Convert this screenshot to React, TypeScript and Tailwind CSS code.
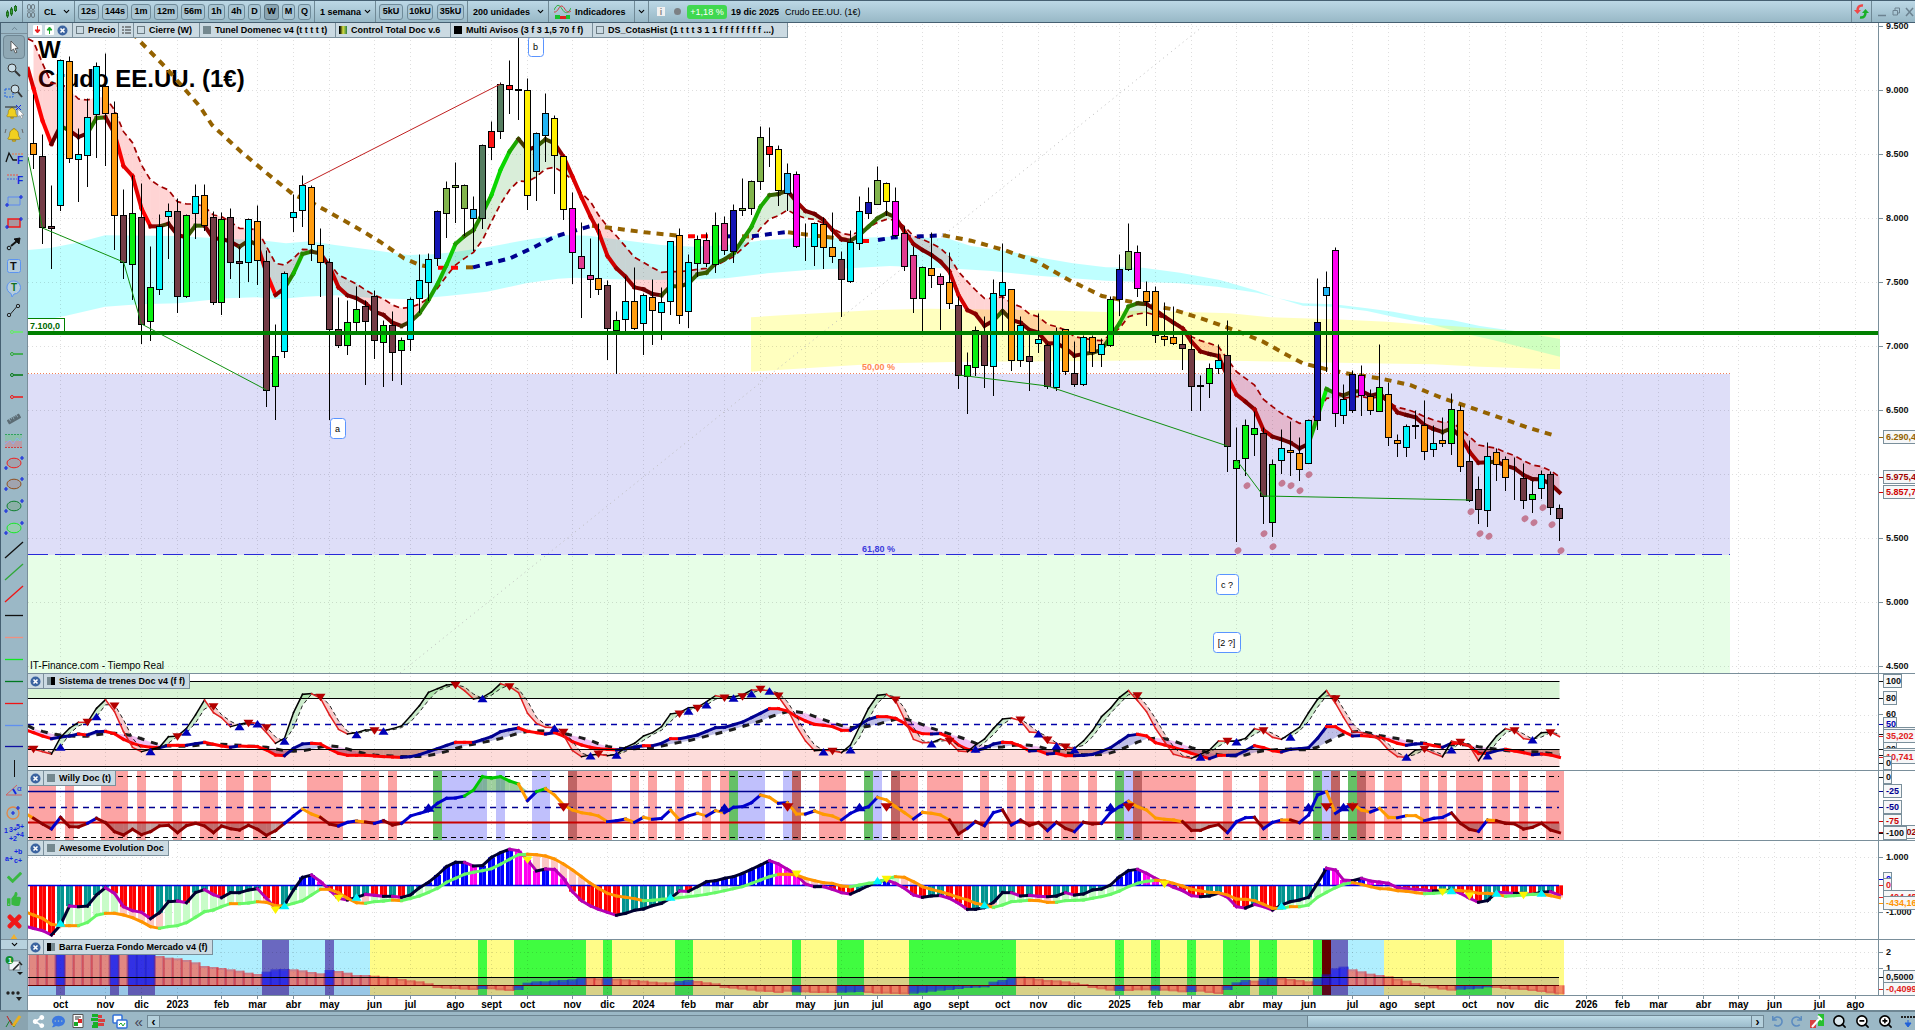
import React from 'react';
import { FiChevronDown, FiChevronUp, FiSearch, FiZoomIn, FiZoomOut } from 'react-icons/fi';
import { FaBell, FaCheck, FaThumbsUp, FaTimes, FaShareAlt, FaCommentDots, FaUndo, FaRedo, FaRuler } from 'react-icons/fa';

type Pt = [number, number];
type Candle = [string, number, number, number, number];

const GRAY = '#7a8f9b';

// Levels are stored in thirds of a pixel, x positions as bar indexes
const bx = (i: number) => Math.round(8.976 * i) + 5.5;
const ly = (v: number) => Math.floor(v / 3) + 0.5;

const nums = (s: string) => s.trim().split(/\s+/).map(Number);

const COLORS: Record<string, string> = {
  o: '#ff9c10', m: '#743c46', c: '#00f4fc', g: '#08f010', n: '#1414b4', l: '#82b44c',
  b: '#22b4f4', d: '#557d60', r: '#ff1414', k: '#000000', y: '#fff000', f: '#ff00f0', p: '#e03c90',
};

// colour, body top, body bottom, high, low
const candles: Candle[] = [
  ['o', 430, 463, 282, 506], ['m', 469, 683, 402, 731], ['m', 679, 685, 555, 806], ['c', 181, 616, 177, 632],
  ['o', 184, 475, 168, 488], ['c', 463, 479, 384, 605], ['c', 352, 466, 294, 560], ['c', 199, 343, 186, 473],
  ['o', 259, 341, 159, 497], ['o', 340, 646, 303, 749], ['m', 646, 787, 567, 836], ['g', 640, 793, 527, 899],
  ['m', 652, 973, 549, 1031], ['g', 862, 964, 738, 1022], ['c', 679, 868, 642, 884], ['c', 634, 649, 609, 776],
  ['m', 634, 889, 594, 938], ['g', 646, 889, 642, 893], ['c', 589, 640, 552, 716], ['o', 586, 677, 552, 690],
  ['m', 652, 907, 633, 914], ['g', 658, 907, 637, 944], ['m', 652, 787, 624, 836], ['m', 784, 790, 740, 893],
  ['c', 658, 787, 655, 845], ['o', 664, 781, 615, 854], ['m', 784, 1171, 750, 1218], ['g', 1069, 1159, 972, 1257],
  ['c', 820, 1055, 814, 1072], ['c', 637, 652, 584, 695], ['c', 556, 631, 526, 680], ['o', 562, 733, 555, 782],
  ['o', 736, 787, 686, 890], ['m', 787, 988, 775, 1258], ['m', 988, 1036, 891, 1043], ['g', 967, 1036, 900, 1064],
  ['g', 928, 967, 858, 996], ['m', 919, 964, 900, 1152], ['m', 889, 1021, 871, 1074], ['g', 976, 1027, 960, 1158],
  ['m', 976, 1057, 933, 1140], ['g', 1021, 1051, 1012, 1152], ['c', 898, 1018, 892, 1050], ['c', 841, 895, 762, 937],
  ['c', 778, 847, 760, 900], ['n', 634, 775, 632, 795], ['l', 565, 640, 543, 713], ['l', 556, 562, 486, 668],
  ['l', 556, 625, 552, 705], ['b', 628, 655, 588, 750], ['d', 436, 655, 434, 686], ['r', 394, 442, 363, 479],
  ['d', 253, 394, 246, 416], ['r', 256, 269, 180, 339], ['k', 268, 271, 60, 357], ['y', 271, 586, 234, 629],
  ['b', 400, 514, 396, 600], ['b', 340, 406, 279, 485], ['y', 355, 466, 345, 581], ['y', 469, 628, 465, 659],
  ['f', 625, 757, 576, 851], ['p', 769, 805, 667, 951], ['p', 826, 838, 714, 893], ['o', 835, 868, 670, 884],
  ['m', 856, 985, 840, 1079], ['g', 961, 991, 934, 1119], ['c', 904, 958, 830, 990], ['o', 904, 985, 801, 989],
  ['c', 886, 971, 880, 1064], ['o', 892, 931, 837, 1032], ['c', 907, 937, 861, 1017], ['c', 724, 904, 724, 942],
  ['o', 706, 946, 684, 971], ['c', 787, 934, 762, 983], ['g', 718, 790, 707, 830], ['p', 721, 790, 698, 798],
  ['g', 676, 793, 636, 818], ['p', 670, 751, 648, 762], ['n', 631, 754, 612, 788], ['l', 625, 631, 534, 645],
  ['l', 544, 625, 540, 642], ['l', 412, 544, 378, 567], ['r', 439, 463, 381, 500], ['y', 448, 571, 435, 615],
  ['b', 520, 580, 489, 630], ['f', 523, 739, 513, 741], ['k', 736, 737, 669, 782], ['c', 670, 739, 666, 795],
  ['o', 673, 742, 652, 806], ['o', 742, 769, 636, 788], ['m', 778, 838, 753, 948], ['c', 727, 844, 690, 846],
  ['c', 634, 730, 588, 749], ['n', 607, 640, 561, 656], ['l', 541, 613, 498, 614], ['y', 550, 604, 546, 645],
  ['f', 604, 706, 561, 710], ['p', 700, 799, 680, 812], ['p', 766, 895, 740, 938], ['g', 802, 895, 798, 993],
  ['o', 805, 826, 696, 863], ['p', 829, 853, 820, 987], ['o', 847, 910, 756, 924], ['m', 916, 1126, 890, 1164],
  ['g', 1096, 1129, 1056, 1239], ['g', 991, 1102, 980, 1125], ['m', 1000, 1096, 950, 1161], ['c', 880, 1099, 837, 1185],
  ['c', 847, 886, 729, 995], ['o', 868, 1081, 868, 1110], ['c', 976, 1081, 950, 1098], ['m', 1069, 1084, 990, 1170],
  ['c', 1018, 1030, 939, 1058], ['m', 1036, 1159, 1030, 1166], ['c', 1000, 1162, 981, 1170], ['o', 988, 1114, 988, 1124],
  ['m', 1120, 1153, 1025, 1160], ['c', 1012, 1153, 1005, 1157], ['o', 1012, 1057, 1007, 1100], ['c', 1033, 1063, 1015, 1098],
  ['g', 898, 1036, 888, 1040], ['n', 808, 898, 763, 947], ['l', 754, 808, 669, 810], ['f', 757, 865, 735, 888],
  ['o', 874, 904, 845, 975], ['o', 874, 1006, 858, 1028], ['o', 1009, 1018, 907, 1035], ['o', 1012, 1030, 918, 1034],
  ['m', 1033, 1045, 1000, 1107], ['m', 1048, 1159, 1005, 1230], ['k', 1156, 1159, 1125, 1230], ['g', 1105, 1150, 1089, 1191],
  ['c', 1081, 1105, 1032, 1120], ['m', 1066, 1339, 960, 1413], ['g', 1381, 1405, 1281, 1623], ['g', 1276, 1375, 1257, 1425],
  ['g', 1285, 1303, 1235, 1367], ['m', 1300, 1489, 1283, 1569], ['g', 1393, 1567, 1377, 1608], ['c', 1345, 1381, 1287, 1419],
  ['o', 1351, 1357, 1263, 1425], ['o', 1360, 1408, 1312, 1440], ['c', 1261, 1390, 1257, 1391], ['n', 967, 1261, 834, 1287],
  ['b', 862, 886, 815, 1115], ['f', 751, 1240, 741, 1278], ['c', 1198, 1246, 1152, 1269], ['n', 1123, 1231, 1111, 1238],
  ['f', 1126, 1186, 1095, 1247], ['o', 1189, 1231, 1167, 1244], ['g', 1162, 1234, 1032, 1234], ['o', 1183, 1312, 1146, 1335],
  ['o', 1321, 1330, 1303, 1368], ['c', 1279, 1342, 1273, 1368], ['k', 1276, 1279, 1230, 1314], ['o', 1276, 1354, 1200, 1377],
  ['c', 1330, 1348, 1275, 1368], ['o', 1321, 1330, 1251, 1338], ['g', 1228, 1330, 1179, 1362], ['o', 1231, 1399, 1217, 1413],
  ['m', 1384, 1501, 1320, 1503], ['m', 1468, 1528, 1428, 1569], ['c', 1369, 1531, 1326, 1578], ['o', 1357, 1393, 1345, 1440],
  ['o', 1378, 1432, 1369, 1470], ['k', 1429, 1430, 1373, 1497], ['m', 1435, 1501, 1390, 1524], ['g', 1483, 1498, 1440, 1536],
  ['c', 1423, 1465, 1410, 1494], ['m', 1423, 1522, 1415, 1542], ['m', 1525, 1555, 1512, 1620],
];

const fastMa = nums(`265 362 432 378 392 411 400 354 352 400 498 528 625 679 679 671 705 712 677 677
716 716 725 740 722 735 820 885 865 820 762 755 760 800 862 886 895 910 935 945
968 978 965 940 900 852 795 732 708 690 640 585 510 455 417 450 440 418 430 470
530 592 650 695 768 805 830 862 868 882 886 858 860 850 823 818 790 778 760 720
680 620 586 582 572 605 633 642 660 690 718 722 705 680 655 640 652 695 732 750
765 785 815 885 930 942 977 962 933 960 968 990 998 1030 1030 1045 1067 1062 1058 1050
1010 970 920 910 912 930 950 968 985 1025 1054 1062 1068 1130 1184 1205 1228 1290 1310 1318
1328 1345 1332 1250 1167 1180 1186 1175 1173 1187 1180 1205 1237 1245 1252 1275 1287 1296 1285 1310
1355 1388 1387 1385 1397 1405 1425 1437 1438 1452 1477`);

const slowMa = nums(`125 190 250 250 270 297 300 292 292 330 395 428 495 540 558 570 605 612 612 620
645 650 665 685 686 690 740 790 795 775 748 750 770 790 825 838 852 870 885 897
915 925 922 912 895 865 828 795 775 757 720 665 612 570 543 545 530 507 502 518
540 580 605 645 680 708 740 772 787 803 817 815 815 812 808 805 797 783 770 745
720 685 657 647 630 645 655 658 670 685 700 705 695 682 667 658 660 680 708 718
730 745 770 815 845 870 895 895 890 910 920 942 950 973 980 990 1010 1015 1020 1022
1005 985 950 942 938 945 955 965 980 1010 1022 1030 1040 1078 1115 1135 1155 1198 1220 1240
1255 1270 1265 1240 1195 1193 1195 1190 1190 1195 1190 1207 1222 1228 1237 1250 1260 1267 1265 1287
1310 1335 1340 1345 1357 1367 1382 1395 1400 1412 1430`);

const cyanTop: Pt[] = [[28, 750], [50, 744], [77, 728], [105, 706], [175, 708], [212, 714], [265, 722], [286, 730], [310, 724], [335, 735], [367, 748], [408, 765], [433, 763], [453, 757], [490, 740], [530, 718], [559, 705], [588, 707], [616, 718], [661, 735], [694, 740], [726, 735], [767, 720], [800, 714], [849, 715], [890, 710], [947, 715], [971, 738], [1004, 752], [1041, 773], [1073, 790], [1106, 802], [1143, 803], [1180, 818], [1220, 840], [1257, 872], [1277, 894], [1303, 910], [1334, 913], [1367, 925], [1393, 935], [1420, 950], [1452, 960], [1480, 978], [1513, 992], [1560, 1017]];
const cyanBottom: Pt[] = [[28, 970], [65, 948], [105, 920], [139, 913], [178, 910], [226, 895], [257, 892], [277, 898], [305, 890], [336, 886], [376, 895], [411, 898], [447, 888], [487, 875], [526, 850], [558, 836], [575, 833], [612, 838], [653, 840], [702, 838], [726, 835], [767, 820], [808, 810], [849, 805], [890, 798], [947, 805], [992, 813], [1041, 828], [1106, 842], [1180, 850], [1217, 860], [1257, 878], [1280, 896], [1303, 917], [1333, 920], [1367, 933], [1393, 950], [1427, 970], [1463, 1000], [1493, 1020], [1530, 1048], [1560, 1070]];
const yellowTop: Pt[] = [[751, 952], [786, 945], [877, 930], [930, 926], [1060, 932], [1107, 936], [1135, 932], [1180, 935], [1230, 940], [1270, 952], [1334, 958], [1387, 965], [1427, 975], [1452, 978], [1513, 992], [1560, 1005]];
const yellowBottom: Pt[] = [[751, 1115], [829, 1100], [886, 1090], [967, 1085], [1090, 1083], [1171, 1080], [1247, 1083], [1367, 1090], [1433, 1093], [1480, 1100], [1560, 1108]];

const BROWN = '#946200';
const NAVY = '#000090';
const tunnel: { color: string; pts: Pt[] }[] = [
  { color: BROWN, pts: [[133, 96], [137, 115], [165, 200], [184, 265], [200, 320], [212, 375], [241, 455], [269, 525], [294, 585], [310, 605], [331, 640], [355, 680], [380, 725], [404, 775], [420, 795], [433, 803]] },
  { color: '#ff0000', pts: [[438, 803], [461, 803]] },
  { color: BROWN, pts: [[466, 802], [473, 802]] },
  { color: NAVY, pts: [[473, 802], [510, 775], [535, 740], [555, 710], [571, 695], [592, 677]] },
  { color: BROWN, pts: [[592, 677], [612, 684], [645, 697], [682, 708]] },
  { color: '#ff0000', pts: [[688, 709], [714, 709]] },
  { color: NAVY, pts: [[727, 709], [740, 709]] },
  { color: BROWN, pts: [[742, 709], [751, 709]] },
  { color: NAVY, pts: [[752, 709], [770, 702], [788, 696]] },
  { color: BROWN, pts: [[788, 697], [833, 713], [853, 722]] },
  { color: '#ff0000', pts: [[862, 723], [875, 723]] },
  { color: NAVY, pts: [[878, 720], [894, 712], [920, 709], [943, 706]] },
  { color: BROWN, pts: [[943, 706], [971, 722], [1004, 750], [1037, 785], [1069, 840], [1102, 888], [1139, 910], [1171, 927], [1204, 958], [1237, 993], [1263, 1025], [1287, 1065], [1303, 1090], [1327, 1108], [1350, 1122], [1380, 1135], [1410, 1155], [1443, 1195], [1470, 1222], [1497, 1250], [1527, 1282], [1556, 1308]] },
];

const dots: Pt[] = [[1238, 1652], [1247, 1457], [1264, 1601], [1273, 1640], [1282, 1450], [1291, 1457], [1300, 1472], [1309, 1424], [1471, 1535], [1480, 1601], [1489, 1609], [1525, 1556], [1534, 1568], [1543, 1523], [1552, 1574], [1561, 1652]];

const months: [number, string][] = [
  [3, 'oct'], [8, 'nov'], [12, 'dic'], [16, '2023'], [21, 'feb'], [25, 'mar'], [29, 'abr'], [33, 'may'], [38, 'jun'], [42, 'jul'], [47, 'ago'], [51, 'sept'],
  [55, 'oct'], [60, 'nov'], [64, 'dic'], [68, '2024'], [73, 'feb'], [77, 'mar'], [81, 'abr'], [86, 'may'], [90, 'jun'], [94, 'jul'], [99, 'ago'], [103, 'sept'],
  [108, 'oct'], [112, 'nov'], [116, 'dic'], [121, '2025'], [125, 'feb'], [129, 'mar'], [134, 'abr'], [138, 'may'], [142, 'jun'], [147, 'jul'], [151, 'ago'], [155, 'sept'],
  [160, 'oct'], [164, 'nov'], [168, 'dic'], [173, '2026'], [177, 'feb'], [181, 'mar'], [186, 'abr'], [190, 'may'], [194, 'jun'], [199, 'jul'], [203, 'ago'],
];

const trainFast = nums(`268 275 282 232 205 187 187 145 119 155 215 262 275 268 262 230 228 205 165 120
158 173 200 193 187 190 218 250 235 158 103 101 115 165 208 222 218 210 209 212
206 198 168 137 97 86 75 73 92 117 112 96 71 80 98 160 190 202 203 225
272 290 285 283 287 283 262 250 228 218 200 162 158 143 142 125 107 112 110 105
90 90 92 110 148 200 243 272 270 273 278 255 200 145 106 103 122 178 238 248
248 237 245 273 275 255 237 205 177 174 182 216 218 248 250 262 265 243 212 170
145 112 92 122 155 205 245 283 290 295 283 270 243 244 243 235 206 212 232 238
220 202 158 118 92 130 172 215 218 225 240 270 290 292 270 268 280 290 244 248
258 302 262 228 206 212 236 240 218 216 230`);

const trainSlow = nums(`218 228 236 231 228 222 225 215 214 221 238 250 258 262 263 256 256 256 251 247
253 258 262 258 259 260 270 285 287 265 252 250 252 267 280 286 286 286 288 290
291 292 290 284 275 266 256 247 247 247 239 230 215 209 204 214 218 222 218 228
245 255 262 266 268 270 266 261 257 257 250 236 236 231 225 214 203 202 194 186
173 160 146 146 153 170 183 193 196 200 211 211 195 178 170 170 175 190 213 221
222 221 232 255 268 272 265 252 247 248 258 273 272 282 280 287 287 286 283 274
263 245 227 223 228 248 255 262 270 280 288 296 286 286 285 272 257 263 272 276
268 266 263 235 200 200 215 228 227 229 232 240 250 256 252 251 257 262 250 250
258 280 280 272 268 273 278 284 282 285 292`);

const trainDown: Pt[] = [[0, 268], [6, 187], [9, 138], [16, 230], [20, 140], [24, 190], [26, 203], [32, 112], [38, 212], [47, 76], [53, 80], [59, 217], [63, 282], [72, 162], [74, 145], [77, 114], [79, 110], [81, 88], [83, 108], [89, 274], [96, 120], [102, 244], [110, 180], [113, 240], [115, 261], [123, 107], [133, 244], [137, 212], [145, 116], [155, 268], [159, 247], [165, 212], [169, 218]];
const trainUp: Pt[] = [[3, 262], [7, 170], [13, 275], [17, 217], [23, 200], [25, 192], [28, 244], [36, 224], [39, 214], [50, 116], [58, 205], [62, 288], [65, 286], [73, 154], [75, 135], [78, 115], [80, 102], [82, 94], [88, 276], [91, 270], [100, 252], [105, 268], [112, 222], [114, 258], [116, 270], [130, 292], [134, 246], [140, 232], [153, 292], [158, 270], [162, 288], [167, 240]];

const willy = nums(`475 492 507 472 500 501 490 475 488 515 525 508 524 515 498 496 518 497 490 498
518 498 506 510 496 508 526 512 490 468 447 462 472 492 498 487 483 486 490 482
495 490 468 460 452 430 415 414 408 390 350 354 350 363 372 422 395 386 405 435
450 458 462 468 485 482 477 487 472 478 475 450 480 468 460 468 452 458 442 440
428 405 412 430 428 462 462 453 463 468 480 460 448 440 412 420 440 458 477 457
460 465 480 522 505 485 497 458 450 495 480 496 488 512 487 505 515 487 492 490
458 440 424 440 450 474 478 480 485 511 511 500 494 518 485 473 472 506 487 480
480 488 465 405 395 460 445 432 450 456 445 472 473 467 467 482 475 472 459 490
508 514 480 482 490 492 507 502 490 510 518`);

const willyBands: [string, [number, number][]][] = [
  ['#fca4a4', [[0, 2], [4, 4], [8, 10], [12, 12], [16, 16], [19, 20], [22, 23], [25, 26], [31, 34], [37, 38], [40, 40], [61, 64], [67, 67], [69, 69], [72, 72], [75, 75], [77, 77], [88, 90], [97, 98], [100, 103], [106, 106], [109, 109], [111, 111], [113, 113], [115, 116], [118, 118], [124, 129], [133, 133], [137, 137], [140, 141], [149, 149], [151, 152], [155, 155], [157, 157], [159, 161], [163, 164], [166, 166], [169, 170]]],
  ['#c06464', [[60, 60], [85, 85], [96, 96], [123, 123], [145, 145], [148, 148]]],
  ['#66c066', [[45, 45], [78, 78], [93, 93], [121, 121], [143, 143], [147, 147]]],
  ['#c0c0fc', [[46, 50], [52, 52], [56, 57], [79, 81], [84, 84], [94, 94], [122, 122], [144, 144]]],
];

const awesome = nums(`805 812 825 795 738 740 738 705 683 700 740 752 757 776 758 725 723 728 698 689
704 713 698 698 690 686 715 745 735 690 652 645 665 690 715 720 712 703 706 709
709 712 705 683 667 645 620 607 607 618 617 592 578 568 572 600 633 627 628 655
695 722 738 748 757 766 760 751 747 737 730 715 693 694 680 665 662 655 650 640
628 615 602 612 628 645 672 680 680 688 698 702 690 677 665 660 670 685 705 712
708 707 715 730 748 748 743 727 698 698 708 706 709 710 708 698 705 702 690 687
675 650 632 628 640 655 668 682 692 707 710 708 700 712 740 744 733 740 750 735
725 720 712 670 625 630 660 662 655 663 666 670 683 686 688 690 693 692 690 700
715 727 722 697 698 700 700 703 697 695 706`);

const awesomeSignal = nums(`765 775 793 797 797 797 787 766 760 760 765 773 785 800 805 800 797 788 772 755
750 740 731 731 729 725 727 737 738 730 722 705 688 688 698 715 728 730 725 723
720 722 715 708 697 685 667 655 643 637 632 626 613 598 584 583 584 588 597 612
630 650 670 685 700 708 712 716 722 721 718 716 713 710 707 703 698 692 686 680
670 660 650 643 643 645 655 662 668 670 678 680 675 670 667 657 650 652 665 680
688 695 703 712 720 730 735 742 735 725 723 721 722 727 727 722 721 720 715 710
703 693 680 670 664 661 663 670 678 688 693 697 698 705 717 718 722 733 745 745
740 740 735 712 697 683 673 668 673 680 686 687 692 694 698 701 700 698 690 692
694 700 700 703 709 707 705 703 702 707 713`);

const strength = nums(`850 850 850 850 850 850 850 850 850 850 850 850 852 860 888 893 895 900 907 918
921 924 928 932 938 942 935 928 927 928 931 936 940 930 933 938 945 945 947 950
952 957 961 964 970 984 986 987 989 990 987 988 991 993 990 968 964 964 961 960
958 952 951 955 951 956 958 960 962 965 967 967 963 960 963 967 970 984 986 989
992 995 996 999 995 997 997 999 999 999 998 997 996 999 1001 1001 1002 1003 1001 998
995 992 990 987 984 983 982 965 960 952 950 952 956 960 961 964 968 972 984 988
992 993 993 991 991 992 992 994 997 996 995 999 1002 990 967 960 962 955 951 954
957 960 964 951 943 925 920 928 934 941 945 949 956 962 969 980 985 989 992 989
988 986 982 984 987 989 990 993 996 1000 1003`);

// Last matching zone wins, so narrow zones follow the wide ones
const strengthZones: [string, number, number][] = [
  ['#b0eefe', 0, 37], ['#fffc88', 38, 170], ['#b0eefe', 147, 150],
  ['#6a68c0', 3, 3], ['#6a68c0', 9, 9], ['#6a68c0', 11, 13], ['#6a68c0', 26, 28], ['#6a68c0', 33, 33],
  ['#40fc40', 50, 50], ['#40fc40', 54, 61], ['#40fc40', 64, 64], ['#40fc40', 72, 73], ['#40fc40', 85, 85],
  ['#40fc40', 90, 92], ['#40fc40', 98, 109], ['#40fc40', 121, 121], ['#40fc40', 125, 125], ['#40fc40', 129, 129],
  ['#40fc40', 133, 135], ['#40fc40', 137, 138], ['#40fc40', 143, 143], ['#640000', 144, 144],
  ['#6a68c0', 145, 146], ['#40fc40', 159, 162],
];

const area = (top: Pt[], bottom: Pt[]) =>
  [...top, ...[...bottom].reverse()].map(([x, y]) => `${x - 28},${y / 3}`).join(' ');

const average = (data: number[], n: number) =>
  data.map((_, i) => {
    const part = data.slice(Math.max(0, i - n + 1), i + 1);
    return part.reduce((a, b) => a + b, 0) / part.length;
  });

interface SegmentsProps {
  data: number[];
  width: number;
  color: (dy: number, value: number, lastDy: number) => string;
}

const Segments: React.FC<SegmentsProps> = ({ data, width, color }) => (
  <g strokeWidth={width} strokeLinecap="square">
    {data.map((v, i) => {
      const prev = i === 0 ? v - (data[1] - v) * 0.6 : data[i - 1];
      const x1 = i === 0 ? 0 : bx(i - 1);
      const lastDy = i > 1 ? prev - data[i - 2] : v - prev;
      return <line key={i} x1={x1} y1={prev / 3} x2={bx(i)} y2={v / 3} stroke={color(v - prev, v, lastDy)} />;
    })}
  </g>
);

// Brighter with the slope of the last two bars
const maColor = (dy: number, _value: number, lastDy: number) => {
  const slope = (dy + lastDy) / 2;
  const t = Math.min(1, Math.abs(slope) / 75);
  return slope > 0
    ? `rgb(${Math.round(80 + 175 * t)},0,0)`
    : `rgb(${Math.round(70 * (1 - t))},${Math.round(50 + 190 * t)},0)`;
};

interface FillProps {
  a: number[];
  b: number[];
  above: string;
  below: string;
}

const FillBetween: React.FC<FillProps> = ({ a, b, above, below }) => (
  <g>
    {a.slice(1).map((v, i) => (
      <polygon
        key={i}
        points={`${bx(i)},${a[i] / 3} ${bx(i + 1)},${v / 3} ${bx(i + 1)},${b[i + 1] / 3} ${bx(i)},${b[i] / 3}`}
        fill={v + a[i] < b[i] + b[i + 1] ? above : below}
      />
    ))}
  </g>
);

const path = (data: number[]) => `0,${data[0] / 3 - 3} ` + data.map((v, i) => `${bx(i)},${v / 3}`).join(' ');

const Marks: React.FC<{ at: Pt[]; up?: boolean; color: string; size?: number }> = ({ at, up, color, size = 5 }) => (
  <g fill={color}>
    {at.map(([i, v]) => {
      const x = bx(i);
      const y = v / 3;
      const s = up ? -1 : 1;
      return <polygon key={i} points={`${x - size},${y - s * 3.5} ${x + size},${y - s * 3.5} ${x},${y + s * (size - 1)}`} />;
    })}
  </g>
);

const Grid: React.FC<{ levels: number[] }> = ({ levels }) => (
  <g stroke="#000" strokeOpacity="0.13" strokeDasharray="1 3">
    {months.map(([i]) => (
      <line key={i} x1={bx(i)} x2={bx(i)} y1="0" y2="1100" />
    ))}
    {levels.map((v) => (
      <line key={v} x1="0" x2="100%" y1={ly(v)} y2={ly(v)} />
    ))}
  </g>
);

const Note: React.FC<{ x: number; y: number; w: number; text: string }> = ({ x, y, w, text }) => (
  <g>
    <rect x={x + 0.5} y={y + 0.5} width={w} height="20" rx="3" fill="#fff" stroke="#5a94ff" />
    <text x={x + w / 2} y={y + 14} textAnchor="middle" fontSize="9">{text}</text>
  </g>
);

interface AxisLabel {
  y: number;
  text: string;
  color?: string;
  box?: boolean;
}

const Axis: React.FC<{ labels: AxisLabel[] }> = ({ labels }) => (
  <svg className="h-full w-[37px] shrink-0 border-l border-[#7a8f9b] bg-white text-[9px] font-bold">
    {labels.map(({ y, text, color = '#111', box }) => (
      <g key={text + y}>
        <line x1="0" x2="4" y1={y + 0.5} y2={y + 0.5} stroke={box ? color : GRAY} />
        {box && (
          <rect x="4.5" y={y - 6.5} width={text.length * 5 + 3} height="13" fill="#f6f7f8" stroke={GRAY} />
        )}
        <text x="7" y={y + 3} fill={color}>{text}</text>
      </g>
    ))}
  </svg>
);

const priceLabels: AxisLabel[] = [
  ...['9.500', '9.000', '8.500', '8.000', '7.500', '7.000', '6.500', '6.000', '5.500', '5.000', '4.500']
    .map((text, i) => ({ y: 3 + i * 64, text }))
    .filter(({ text }) => text !== '6.000'),
  { y: 414, text: '6.290,4', color: BROWN, box: true },
  { y: 454, text: '5.975,4', color: '#a00000', box: true },
  { y: 469, text: '5.857,7', color: '#d00000', box: true },
];

const PriceChart: React.FC = () => (
  <svg className="h-full min-w-0 flex-1 bg-white">
    <g transform="translate(0 -23)">
      <rect x="0" y="374" width="1702" height="181" fill="#dedef8" />
      <rect x="0" y="555" width="1702" height="130" fill="#e7fee7" />
      <g className="text-[24px] font-bold">
        <text x="10" y="58">W</text>
        <text x="10" y="87">Crudo EE.UU. (1€)</text>
      </g>
      <polygon points={area(cyanTop, cyanBottom)} fill="#00ffff" fillOpacity="0.25" />
      <polygon points={area(yellowTop, yellowBottom)} fill="#ffff00" fillOpacity="0.25" />
      <Grid levels={[79, 271, 463, 655, 847, 1039, 1231, 1423, 1615, 1807, 1999]} />
      <line x1="372" y1="673" x2="1174" y2="27" stroke="#bbb" strokeDasharray="1 4" />
      <line x1="0" x2="1702" y1="373.5" y2="373.5" stroke="#f08058" strokeDasharray="1 2" />
      <line x1="0" x2="1702" y1="554.5" y2="554.5" stroke="#2828d8" strokeDasharray="20 7" />
      <g className="text-[9px] font-bold">
        <text x="834" y="370" fill="#ff8850">50,00 %</text>
        <text x="834" y="552" fill="#3c3cdc">61,80 %</text>
      </g>
      <FillBetween a={slowMa} b={fastMa} above="rgba(255,0,0,0.17)" below="rgba(0,140,0,0.15)" />
      <polyline points={path(slowMa)} fill="none" stroke="#a00000" strokeWidth="1.7" strokeDasharray="6 4" />
      {tunnel.map(({ color, pts }, i) => (
        <polyline key={i} points={pts.map(([x, y]) => `${x - 28},${y / 3}`).join(' ')} fill="none" stroke={color} strokeWidth="4" strokeDasharray="7 6" />
      ))}
      <Segments data={fastMa} width={4} color={maColor} />
      {candles.map(([c, top, bottom, high, low], i) => (
        <g key={i} stroke="#000">
          <line x1={bx(i)} x2={bx(i)} y1={ly(high)} y2={ly(low) + 0.5} />
          <rect x={bx(i) - 3} y={ly(top)} width="6" height={ly(bottom) - ly(top)} fill={COLORS[c]} />
        </g>
      ))}
      <rect x="0" y="331" width="100%" height="4" fill="#008000" />
      <rect x="-0.5" y="318.5" width="37" height="13" fill="#fff" stroke="#008000" />
      <text x="2" y="329" fill="#006800" className="text-[9px] font-bold">7.100,0</text>
      <g fill="none" stroke="#109010">
        <polyline points={`0,157 ${bx(1)},228 ${bx(10)},262 ${bx(12)},324 ${bx(26)},390`} />
        <polyline points={`${bx(103)},375 ${bx(113)},386 ${bx(133)},446`} />
        <polyline points={`${bx(134)},460 ${bx(137)},496 ${bx(160)},500`} />
        <line x1={bx(30)} y1="185" x2={bx(52)} y2="84" stroke="#c02020" />
      </g>
      <g fill="#c07088" fillOpacity="0.9">
        {dots.map(([x, y]) => (
          <ellipse key={x} cx={x - 28} cy={y / 3} rx="3.6" ry="3" transform={`rotate(-40 ${x - 28} ${y / 3})`} />
        ))}
      </g>
      <Note x={500} y={36} w={15} text="b" />
      <Note x={302} y={418} w={15} text="a" />
      <Note x={1188} y={574} w={22} text="c ?" />
      <Note x={1185} y={632} w={27} text="[2 ?]" />
      <text x="2" y="669" fontSize="10">IT-Finance.com - Tiempo Real</text>
    </g>
  </svg>
);

const trainSignal = trainFast.map((v, i) => (i === 0 ? v : v * 0.4 + trainFast[i - 1] * 0.6));
const trainSlowSignal = average(trainSlow, 5).map((v, i) => (i < 4 ? v - (4 - i) * 3 : v));

const TrainChart: React.FC = () => (
  <svg className="h-full min-w-0 flex-1 bg-white">
    <g transform="translate(0 -14)">
      <rect x="0" y="21.5" width="1531.5" height="17" fill="#d9f5d6" />
      <rect x="0" y="89.5" width="1531.5" height="17" fill="#fddcda" />
      <Grid levels={[165, 217]} />
      <line x1="0" x2="1531" y1="64.5" y2="64.5" stroke="#0000a8" strokeWidth="1.5" strokeDasharray="6 5" />
      <FillBetween a={trainFast} b={trainSignal} above="rgba(0,160,0,0.2)" below="rgba(220,0,0,0.2)" />
      <FillBetween a={trainSlow} b={trainSlowSignal} above="rgba(0,0,160,0.25)" below="rgba(200,0,200,0.25)" />
      <FillBetween a={trainSlow.map((v) => Math.max(v, 268))} b={trainSlow.map(() => 268)} above="none" below="rgba(140,40,20,0.4)" />
      <polyline points={path(trainSlowSignal)} fill="none" stroke="#1c1c1c" strokeWidth="3" strokeDasharray="7 7" />
      <Segments data={trainSlow} width={3} color={(dy) => (dy < 0 ? '#000090' : '#ff0000')} />
      <polyline points={path(trainSignal)} fill="none" stroke="#222" strokeDasharray="4 3" />
      <Segments data={trainFast} width={1.5} color={(dy) => (dy < 0 ? '#000' : '#e02020')} />
      <g stroke="#000">
        {[65, 115, 268, 319].map((v) => (
          <line key={v} x1="0" x2="1531.5" y1={ly(v)} y2={ly(v)} />
        ))}
      </g>
      <Marks at={trainUp} up color="#0000b8" />
      <Marks at={trainDown} color="#b40000" />
    </g>
  </svg>
);

const WillyChart: React.FC = () => (
  <svg className="h-full min-w-0 flex-1 bg-white">
    <g transform="translate(0 -111)">
      <Grid levels={[]} />
      {willyBands.map(([color, ranges]) =>
        ranges.map(([from, to]) => (
          <rect key={from} x={bx(from) - 4.5} y="100" width={bx(to) - bx(from) + 9} height="90" fill={color} />
        ))
      )}
      <FillBetween a={willy.map((v) => Math.max(v, 488))} b={willy.map(() => 488)} above="none" below="rgba(110,30,30,0.42)" />
      <FillBetween a={willy.map((v) => Math.min(v, 394))} b={willy.map(() => 394)} above="rgba(60,160,60,0.5)" below="none" />
      <g strokeDasharray="5 4" stroke="#000">
        <line x1="0" x2="1531" y1="116.5" y2="116.5" />
        <line x1="0" x2="1531" y1="177.5" y2="177.5" />
      </g>
      <line x1="0" x2="1531" y1="131.5" y2="131.5" stroke="#000090" strokeWidth="1.6" />
      <line x1="0" x2="1531" y1="147.5" y2="147.5" stroke="#000090" strokeWidth="1.5" strokeDasharray="6 5" />
      <line x1="0" x2="1531" y1="162.5" y2="162.5" stroke="#c80000" strokeWidth="2" />
      <Segments
        data={willy}
        width={3}
        color={(dy, value) => {
          if (value < 394) return '#00c800';
          if (value > 487) return '#900000';
          return dy < 0 ? '#0000cc' : '#ff9a00';
        }}
      />
      <Marks at={[[44, 445], [77, 445], [92, 443], [120, 443], [142, 443], [146, 443]]} up color="#0000b8" size={6} />
      <Marks at={[[59, 440], [84, 440], [95, 440], [122, 440], [144, 440], [147, 440]]} color="#b40000" size={6} />
    </g>
  </svg>
);

const barColor = (v: number, dy: number) => {
  if (v > 676) return dy > 0 ? '#ff0000' : '#009490';
  return dy > 0 ? '#ff00f0' : '#0000ff';
};

const AwesomeChart: React.FC = () => (
  <svg className="h-full min-w-0 flex-1 bg-white">
    <g transform="translate(0 -181)">
      <Grid levels={[592, 757]} />
      {awesome.map((v, i) => {
        const s = awesomeSignal[i];
        const dy = v - (awesome[i - 1] ?? v - 1);
        const ds = s - (awesomeSignal[i - 1] ?? s);
        const outside = (s - 676) * (v - 676) > 0 ? Math.abs(s - 676) > Math.abs(v - 676) : true;
        const from = (s - 676) * (v - 676) > 0 ? v : 676;
        return (
          <g key={i}>
            {outside && (
              <rect x={bx(i) - 3.5} y={Math.min(from, s) / 3} width="7" height={Math.abs(s - from) / 3} fill={ds > 0 ? '#fcc8c4' : '#c8fcc8'} />
            )}
            <rect x={bx(i) - 3.5} y={Math.min(v, 676) / 3} width="7" height={Math.abs(v - 676) / 3} fill={barColor(v, dy)} />
            <line x1={bx(i)} x2={bx(i)} y1={676 / 3} y2={v / 3} stroke="#fff" strokeOpacity="0.2" />
          </g>
        );
      })}
      <line x1="0" x2="1531" y1="225.5" y2="225.5" stroke="#0000e0" strokeWidth="1.5" />
      <Segments data={awesome} width={3} color={(dy) => (dy <= 0 ? '#000030' : '#b400b4')} />
      <Segments data={awesomeSignal} width={3} color={(dy) => (dy < 0 ? '#68f868' : '#ff9400')} />
      <Marks at={[[3, 790], [28, 737], [36, 712], [71, 712], [94, 662], [106, 735], [139, 738], [158, 692], [163, 700], [168, 700]]} up color="#00f4fc" />
      <Marks at={[[27, 750], [34, 715], [55, 600], [85, 642], [95, 658], [126, 673], [157, 696], [160, 708], [166, 706]]} color="#fcf400" />
    </g>
  </svg>
);

const zoneAt = (i: number) => strengthZones.filter(([, from, to]) => i >= from && i <= to).pop()![0];

const StrengthChart: React.FC = () => (
  <svg className="h-full min-w-0 flex-1 bg-white">
    <g transform="translate(0 -280)">
      {strengthZones.map(([color, from, to]) => (
        <rect key={`${color}${from}`} x={bx(from) - 4.5} y="280" width={bx(to) - bx(from) + 9} height="60" fill={color} />
      ))}
      <rect x="0" y="317" width="1531" height="20" fill="#3c2888" fillOpacity="0.2" />
      <Grid levels={[877, 925]} />
      {strength.map((v, i) => {
        const zone = zoneAt(i);
        const up = zone !== '#fffc88' && zone !== '#b0eefe';
        const color = up ? '#1414dc' : '#dc2832';
        const y = Math.min(v, 976) / 3;
        const h = Math.abs(v - 976) / 3;
        return (
          <g key={i} fill={color}>
            <rect x={bx(i) - 5} y={y} width="10" height={h} fillOpacity="0.55" />
            <rect x={bx(i) - 3.5} y={y + (v < 976 ? 2 : 0)} width="6" height={Math.max(0, h - 2)} fill={up ? '#2828ff' : '#ff9070'} fillOpacity="0.45" />
            <rect x={bx(i) + 3} y={y} width="2" height={h} fillOpacity="0.35" />
          </g>
        );
      })}
      <line x1="0" x2="1531" y1="317.5" y2="317.5" stroke="#000" />
      <line x1="0" x2="1531" y1="325.5" y2="325.5" stroke="#600" />
    </g>
  </svg>
);

const CloseIcon: React.FC = () => (
  <svg width="11" height="11" viewBox="0 0 11 11" className="shrink-0">
    <circle cx="5.5" cy="5.5" r="5" fill="#3c64a0" />
    <path d="M3.5 3.5l4 4M7.5 3.5l-4 4" stroke="#fff" strokeWidth="1.6" />
  </svg>
);

interface PaneProps {
  title: string;
  swatch: string;
  height: string;
  labels: AxisLabel[];
  children: React.ReactNode;
}

const Pane: React.FC<PaneProps> = ({ title, swatch, height, labels, children }) => (
  <section className={`relative flex shrink-0 border-t border-[#7a8f9b] ${height}`}>
    {children}
    <div className="absolute left-0 top-0 flex h-[15px] items-stretch border-b border-r border-[#7a8f9b] bg-[#cbdae2]">
      <button aria-label={`Cerrar ${title}`} className="flex w-4 items-center justify-center border-r border-[#7a8f9b]">
        <CloseIcon />
      </button>
      <button className="flex items-center gap-1 whitespace-nowrap pl-[3px] pr-1 font-bold">
        <span className={`h-2 w-2 ${swatch}`} />
        {title}
      </button>
    </div>
    <Axis labels={labels} />
  </section>
);

const Sep: React.FC = () => <span className="h-full w-px shrink-0 bg-[#6f8996]" />;

const Dropdown: React.FC<{ label: string; value: string; width: string }> = ({ label, value, width }) => (
  <div className={`relative flex h-full shrink-0 items-center ${width}`}>
    <select aria-label={label} className="h-full w-full appearance-none bg-transparent pl-[5px] font-bold outline-none">
      <option>{value}</option>
    </select>
    <FiChevronDown size={9} strokeWidth={3} className="pointer-events-none absolute right-[3px]" />
  </div>
);

const TimeButton: React.FC<{ text: string; width: string; active?: boolean }> = ({ text, width, active }) => (
  <button
    className={`h-4 shrink-0 rounded-[3px] border font-bold leading-none ${width} ${
      active ? 'border-[#5c7684] bg-[#89a4b1]' : 'border-[#6f8b9a] bg-[#a9c5d3]'
    }`}
  >
    {text}
  </button>
);

const Toolbar: React.FC = () => (
  <header className="flex h-[23px] shrink-0 items-center border-y border-[#466072] bg-gradient-to-b from-[#bcd8e6] to-[#98b8c6]">
    <button aria-label="Velas" className="flex w-[22px] justify-center">
      <svg width="14" height="14" viewBox="0 0 14 14" stroke="#207020" fill="#38a038">
        <path d="M3.5 5v8M7.5 2v9M11.500 0v7" />
        <rect x="2.500" y="7" width="2" height="4" />
        <rect x="6.500" y="4" width="2" height="5" />
        <rect x="10.500" y="1.500" width="2" height="4" />
      </svg>
    </button>
    <Sep />
    <button aria-label="Vincular" className="flex w-[15px] justify-center">
      <svg width="8" height="15" viewBox="0 0 8 15" fill="none" stroke="#6c7c84">
        <rect x="0.500" y="0.500" width="3" height="5" rx="1.500" />
        <rect x="4.500" y="0.500" width="3" height="5" rx="1.500" />
        <rect x="0.500" y="8.500" width="3" height="5" rx="1.500" />
        <rect x="4.500" y="8.500" width="3" height="5" rx="1.500" />
        <path d="M0 7h8" />
      </svg>
    </button>
    <Sep />
    <Dropdown label="Símbolo" value="CL" width="w-[35px]" />
    <Sep />
    <div className="flex gap-[3px] px-[3px]">
      <TimeButton text="12s" width="w-[21px]" />
      <TimeButton text="144s" width="w-[26px]" />
      <TimeButton text="1m" width="w-5" />
      <TimeButton text="12m" width="w-6" />
      <TimeButton text="56m" width="w-6" />
      <TimeButton text="1h" width="w-[17px]" />
      <TimeButton text="4h" width="w-[17px]" />
      <TimeButton text="D" width="w-[13px]" />
      <TimeButton text="W" width="w-[15px]" active />
      <TimeButton text="M" width="w-[13px]" />
      <TimeButton text="Q" width="w-[13px]" />
    </div>
    <Sep />
    <Dropdown label="Periodo" value="1 semana" width="w-[60px]" />
    <Sep />
    <div className="flex gap-1 px-[3px]">
      <TimeButton text="5kU" width="w-6" />
      <TimeButton text="10kU" width="w-[26px]" />
      <TimeButton text="35kU" width="w-[27px]" />
    </div>
    <Sep />
    <Dropdown label="Unidades" value="200 unidades" width="w-[80px]" />
    <Sep />
    <button className="flex w-[85px] items-center gap-1 pl-[5px] font-bold">
      <svg width="17" height="16" viewBox="0 0 17 16" fill="none">
        <path d="M0 6C3 0 5 0 8 5s6 5 9-1" stroke="#30b040" />
        <path d="M0 8C4 9 5 1 8 2s4 9 9 5" stroke="#d04040" />
        <path d="M1 11h5v4H1zM12 11h4v4h-4z" fill="#18c030" />
        <path d="M6 12h6v3H6z" fill="#e02020" />
      </svg>
      Indicadores
    </button>
    <Sep />
    <button aria-label="Más indicadores" className="flex w-[13px] justify-center">
      <FiChevronDown size={9} strokeWidth={3} />
    </button>
    <Sep />
    <div className="flex items-center pl-2">
      <span className="flex h-[9px] w-2 items-center justify-center bg-[#f0f0f0] font-bold text-[#888]">i</span>
      <span className="ml-[9px] h-[7px] w-[7px] rounded-full bg-[#7c8084]" />
      <span className="ml-[6px] w-10 rounded-[3px] bg-[#40d850] py-px text-center text-white">+1,18 %</span>
      <span className="ml-1 w-[54px] font-bold">19 dic 2025</span>
      <span>Crudo EE.UU. (1€)</span>
    </div>
    <div className="ml-auto flex h-full items-center">
      <Sep />
      <button aria-label="Actualizar" className="flex w-[19px] justify-center">
        <svg width="15" height="15" viewBox="0 0 15 15" fill="none" strokeWidth="2.500">
          <path d="M9 1.500C5 1 3.500 3 3.500 7" stroke="#f04848" />
          <path d="M0 6h7L3.500 10z" fill="#f04848" />
          <path d="M6 13.500c4 .5 5.500-1.500 5.500-5.500" stroke="#18b028" />
          <path d="M8 9h7L11.500 5z" fill="#18b028" />
        </svg>
      </button>
      <Sep />
      <svg width="43" height="12" viewBox="0 0 43 12" fill="none" stroke="#6c8290" strokeWidth="1.500">
        <path d="M6 9.500h8" />
        <path d="M21 4.500h4.500v4.500H21zM23 4V2h4.500v5H26" strokeWidth="1" />
        <path d="M34 2l7 8M41 2l-7 8" />
      </svg>
    </div>
  </header>
);

const Plus: React.FC<{ x: number; y: number }> = ({ x, y }) => (
  <path d={`M${x - 2} ${y}h4M${x} ${y - 2}v4`} stroke="#1428e0" strokeWidth="1.200" />
);

const Ring: React.FC<{ color: string }> = ({ color }) => (
  <>
    <ellipse cx="11" cy="10" rx="7" ry="4.800" stroke={color} fill="#a89098" fillOpacity="0.5" />
    <Plus x={3} y={15} />
    <Plus x={19} y={5} />
  </>
);

const Ray: React.FC<{ color: string }> = ({ color }) => (
  <g stroke={color}>
    <circle cx="9" cy="10" r="1.500" />
    <path d="M11 10h9" strokeWidth="1.500" />
  </g>
);

const Bar: React.FC<{ color: string }> = ({ color }) => <path d="M2 10.500h18" stroke={color} strokeWidth="1.300" />;
const Slash: React.FC<{ color: string }> = ({ color }) => <path d="M2 18L20 2" stroke={color} strokeWidth="1.300" />;

const tools: [string, React.ReactNode][] = [
  ['Puntero', <path d="M8 4v10l2.500-2 1.800 4 1.600-.7-1.800-3.900H15z" fill="#fff" stroke="#444" strokeWidth="0.800" />],
  ['Lupa', <g stroke="#333"><circle cx="9" cy="8" r="4" fill="#c8dce6" /><path d="M12 11l5 5" strokeWidth="2" /></g>],
  ['Zoom de zona', <g stroke="#333"><path d="M2 7h8v8H2z" stroke="#2060e0" strokeDasharray="2 1" /><circle cx="12" cy="7" r="4" fill="#c8dce6" /><path d="M15 10l4 5" strokeWidth="2" /></g>],
  ['Alerta rápida', <g><FaBell x={3} y={4} size={12} color="#f0d020" stroke="#806000" strokeWidth={20} /><path d="M2 4h12" stroke="#222" /><path d="M13 7l5-5M13 2l5 5" stroke="#1428e0" /><path d="M15 6v8l2-1.500 1.500 3 1.300-.6-1.500-3H21z" fill="#fff" stroke="#777" strokeWidth="0.500" /></g>],
  ['Alerta', <g><FaBell x={4} y={3} size={14} color="#f0d020" stroke="#806000" strokeWidth={20} /><path d="M3 4l-1 4M19 4l1 4" stroke="#666" /></g>],
  ['Fibonacci extensión', <g><path d="M3 15l3-9 4 7h4" stroke="#111" strokeWidth="1.300" /><path d="M9 7h12" stroke="#f07040" strokeDasharray="2 1" /><text x="14" y="17" fill="#1428e0" fontSize="10" fontWeight="bold">F</text></g>],
  ['Fibonacci retroceso', <g><path d="M4 6h12" stroke="#f05040" strokeDasharray="2 1" /><path d="M4 10h10" stroke="#4060e0" strokeDasharray="2 1" /><text x="14" y="15" fill="#1428e0" fontSize="10" fontWeight="bold">F</text></g>],
  ['Rectángulo azul', <g><path d="M5 6h12v8H5z" stroke="#5c88f0" /><Plus x={4} y={14} /><Plus x={18} y={6} /></g>],
  ['Rectángulo rojo', <g><path d="M5 6h12v8H5z" stroke="#f01818" fill="#a898a0" strokeWidth="1.400" /><Plus x={4} y={14} /><Plus x={18} y={6} /></g>],
  ['Flecha', <g stroke="#111"><circle cx="6" cy="14" r="1.800" /><path d="M8 12l6-5" strokeWidth="2" /><path d="M11 5l6-1-1 6z" fill="#111" /></g>],
  ['Texto', <g><rect x="4.500" y="3.500" width="13" height="13" rx="2" stroke="#5c94f0" fill="#b4ccdc" /><text x="7" y="14" fontSize="11" fontWeight="bold" fill="#111">T</text></g>],
  ['Bocadillo', <g><path d="M11 3a6.500 6.500 0 1 1 0 13l-2 3-1-3.500A6.500 6.500 0 0 1 11 3z" stroke="#5c94f0" fill="#b4ccdc" /><text x="8" y="13" fontSize="10" fontWeight="bold" fill="#107020">T</text></g>],
  ['Segmento', <g stroke="#222"><circle cx="6" cy="15" r="1.700" /><circle cx="15" cy="6" r="1.700" /><path d="M7.500 14l6-7" /></g>],
  ['Rayo claro', <Ray color="#60f060" />],
  ['Rayo verde', <Ray color="#28a830" />],
  ['Rayo oscuro', <Ray color="#007810" />],
  ['Rayo rojo', <Ray color="#f01414" />],
  ['Regla', <FaRuler x={4} y={3} size={14} color="#5c6c74" />],
  ['Patrones', <g><path d="M2 3h17v7H2z" fill="#8cc0ac" /><path d="M2 10h17v6H2z" fill="#b89ca8" /><path d="M2 3.500h17" stroke="#30a060" strokeDasharray="2 1" /><path d="M2 16.500h17" stroke="#d04040" strokeDasharray="2 1" /><path d="M2 13l5-4 3 4 4-6 3 3 2-3" stroke="#8cb0f0" /></g>],
  ['Elipse roja', <Ring color="#f02020" />],
  ['Elipse marrón', <Ring color="#905020" />],
  ['Elipse verde', <g><ellipse cx="11" cy="10" rx="7" ry="4.800" stroke="#108030" fill="#8cb0a8" /><Plus x={3} y={15} /><Plus x={19} y={5} /></g>],
  ['Elipse lima', <g><ellipse cx="11" cy="10" rx="7" ry="4.800" stroke="#18e828" fill="#98ccb0" /><Plus x={3} y={15} /><Plus x={19} y={5} /></g>],
  ['Línea negra', <Slash color="#111" />],
  ['Línea verde', <Slash color="#30a838" />],
  ['Línea roja', <Slash color="#f01414" />],
  ['Horizontal negra', <Bar color="#111" />],
  ['Horizontal salmón', <Bar color="#f09080" />],
  ['Horizontal lima', <Bar color="#10e820" />],
  ['Horizontal verde', <Bar color="#007820" />],
  ['Horizontal roja', <Bar color="#f01414" />],
  ['Horizontal celeste', <Bar color="#6090f0" />],
  ['Horizontal azul', <Bar color="#1010a0" />],
  ['Vertical', <path d="M11.500 2v17" stroke="#111" />],
  ['Ángulo', <g><path d="M3 15h16M3 15L14 5" stroke="#d06060" /><path d="M10 9l3 5" stroke="#1428e0" strokeWidth="2" /><text x="14" y="11" fontSize="8" fill="#1428e0">α</text></g>],
  ['Círculo', <g><circle cx="10" cy="11" r="6" stroke="#e08848" strokeWidth="1.300" /><Plus x={10} y={11} /><Plus x={15} y={6} /></g>],
  ['Ondas 12345', <g fill="#1428e0" fontSize="7" fontWeight="bold"><text x="1" y="9">1</text><text x="6" y="8">3+</text><text x="13" y="5">5+</text><text x="13" y="13">+4</text><text x="6" y="17">+2</text></g>],
  ['Ondas abc', <g fill="#1428e0" fontSize="7" fontWeight="bold"><text x="2" y="15">a+</text><text x="11" y="8">+b</text><text x="11" y="17">c+</text></g>],
  ['Aceptar', <FaCheck x={4} y={3} size={15} color="#38b840" />],
  ['Me gusta', <FaThumbsUp x={4} y={3} size={14} color="#38b840" />],
  ['Borrar', <FaTimes x={2} y={1} size={19} color="#f01818" stroke="#f01818" strokeWidth={30} />],
];

const SideBar: React.FC = () => (
  <nav className="flex w-7 shrink-0 flex-col border-l border-r border-l-[#466072] border-r-[#7a8f9b] bg-[#9bb8c6]">
    <button aria-label="Subir" className="flex h-[11px] items-center justify-center border-b border-[#7a8f9b]">
      <FiChevronUp size={9} color="#5c7482" />
    </button>
    <div className="flex min-h-0 flex-1 flex-col pt-px">
      {tools.map(([name, icon], i) => (
        <button
          key={name}
          aria-label={name}
          className={`mx-[2px] flex min-h-0 flex-1 items-center justify-center rounded-sm ${i === 0 ? 'border border-[#6f8794] bg-[#8fa8b4]' : ''}`}
        >
          <svg width="22" height="20" viewBox="0 0 22 20" fill="none" className="shrink-0">{icon}</svg>
        </button>
      ))}
    </div>
    <div className="flex h-[7px] justify-center overflow-hidden">
      <svg width="10" height="12" viewBox="0 0 10 12"><path d="M5 2l4 6H1z" fill="#f0b030" /></svg>
    </div>
    <button aria-label="Bajar" className="flex h-[11px] items-center justify-center border-y border-[#7a8f9b] bg-[#b8d2de]">
      <FiChevronDown size={9} strokeWidth={3} />
    </button>
    <button aria-label="Informes" className="flex h-[30px] items-center justify-center">
      <svg width="20" height="20" viewBox="0 0 20 20" fill="none">
        <path d="M5 6h11v9H5z" fill="#f0f4f6" stroke="#78868e" />
        <circle cx="5.500" cy="5" r="4" fill="#109030" />
        <text x="4" y="8" fontSize="7" fontWeight="bold" fill="#fff">1</text>
        <path d="M9 15l6-6M15 7l3 3" stroke="#222" strokeWidth="1.600" />
        <path d="M13 17h6l-3 3z" fill="#111" />
      </svg>
    </button>
    <button aria-label="Más" className="flex h-[30px] items-center justify-center">
      <svg width="18" height="12" viewBox="0 0 18 12" fill="#222">
        <circle cx="3" cy="4" r="1.700" /><circle cx="8" cy="4" r="1.700" /><circle cx="13" cy="4" r="1.700" /><path d="M11 8h6l-3 4z" />
      </svg>
    </button>
  </nav>
);

const Tab: React.FC<{ text: string; swatch: string; width: string }> = ({ text, swatch, width }) => (
  <button className={`flex h-full shrink-0 items-center gap-1 whitespace-nowrap border-r border-[#7a8f9b] pl-[3px] font-bold ${width}`}>
    <span className={`h-2 w-2 shrink-0 ${swatch}`} />
    {text}
  </button>
);

const hollow = 'border border-[#6c7c84]';

const Tabs: React.FC = () => (
  <div className="absolute left-0 top-0 flex h-[15px] items-center border-b border-[#7a8f9b] bg-[#cbdae2]">
    <div className="flex h-full w-[45px] items-center justify-center gap-[3px] border-r border-[#7a8f9b]">
      <svg width="9" height="10" viewBox="0 0 9 10"><rect width="9" height="10" rx="1" fill="#fff" /><path d="M4.500 1v4M2 5h5L4.500 8z" fill="#e82020" stroke="#e82020" /></svg>
      <svg width="9" height="10" viewBox="0 0 9 10"><rect width="9" height="10" rx="1" fill="#fff" /><path d="M4.500 9V5M2 5h5L4.500 2z" fill="#18a828" stroke="#18a828" /></svg>
      <CloseIcon />
    </div>
    <Tab text="Precio" swatch={hollow} width="w-[46px]" />
    <button aria-label="Lista" className="flex h-full w-[15px] items-center justify-center border-r border-[#7a8f9b]">
      <svg width="9" height="8" viewBox="0 0 9 8" stroke="#333"><path d="M0 1h2M3 1h6M0 4h2M3 4h6M0 7h2M3 7h6" /></svg>
    </button>
    <Tab text="Cierre (W)" swatch={hollow} width="w-[66px]" />
    <Tab text="Tunel Domenec v4 (t t t t t)" swatch="bg-[#74888f]" width="w-[136px]" />
    <Tab text="Control Total Doc v.6" swatch="bg-gradient-to-r from-black via-[#d8e040] to-[#208040]" width="w-[115px]" />
    <Tab text="Multi Avisos (3 f 3 1,5 70 f f)" swatch="bg-black" width="w-[142px]" />
    <Tab text="DS_CotasHist (1 t t t 3 1 1 f f f f f f f f ...)" swatch={hollow} width="w-[195px]" />
  </div>
);

const TimeAxis: React.FC = () => (
  <svg className="h-[15px] w-full shrink-0 border-t border-[#7a8f9b] bg-white text-[10px] font-bold">
    {months.map(([i, text]) => (
      <g key={i}>
        <line x1={bx(i)} x2={bx(i)} y1="0" y2="3" stroke={GRAY} />
        <text x={bx(i)} y="12" textAnchor="middle">{text}</text>
      </g>
    ))}
  </svg>
);

const BottomBar: React.FC = () => (
  <footer className="flex h-5 shrink-0 items-center border-t-2 border-[#6f8794] bg-[#9bb8c6]">
    <button aria-label="Dibujar" className="flex h-full w-[28px] items-center justify-center bg-[#8aa4b0]">
      <svg width="18" height="16" viewBox="0 0 18 16" fill="none"><path d="M1 14l4-7 4 7 3-6" stroke="#208030" /><path d="M8 13l7-10" stroke="#e8b020" strokeWidth="3" /><path d="M2 3l5 9" stroke="#c02020" /></svg>
    </button>
    <div className="flex w-[119px] shrink-0 items-center justify-between pl-1 pr-1">
      <button aria-label="Compartir"><FaShareAlt size={13} color="#fff" /></button>
      <button aria-label="Mensajes"><FaCommentDots size={13} color="#3c78e0" /></button>
      <button aria-label="Órdenes">
        <svg width="12" height="14" viewBox="0 0 12 14" fill="none"><path d="M1 .5h10v13H1z" fill="#fff" stroke="#555" /><path d="M3 3h6M3 5h4" stroke="#333" /><path d="M2 8h4v4H2z" fill="#18a828" /><path d="M6 5h4v4H6z" fill="#d82828" /></svg>
      </button>
      <button aria-label="Profundidad">
        <svg width="14" height="14" viewBox="0 0 14 14"><path d="M1 0h6v3H1zM0 4h7v3H0zM2 8h5v3H2zM1 11h6v3H1z" fill="#18b028" /><path d="M7 1h4v3H7zM7 5h7v3H7zM7 9h6v3H7z" fill="#d84040" /></svg>
      </button>
      <button aria-label="Ventanas">
        <svg width="16" height="15" viewBox="0 0 16 15" fill="#fff" stroke="#3070d8" strokeWidth="1.500"><rect x="1" y="1" width="9" height="8" rx="1" /><rect x="5" y="6" width="10" height="8" rx="1" /><path d="M7 11l2-2 2 3 2-3" fill="none" stroke="#18a828" strokeWidth="1" /></svg>
      </button>
      <button aria-label="Plegar" className="text-[15px] leading-none text-[#445]">«</button>
    </div>
    <div className="flex h-[13px] min-w-0 flex-1 border border-[#6f8794] bg-[#97b3c0]">
      <button aria-label="Izquierda" className="w-3 shrink-0 border-r border-[#6f8794] bg-[#b4d0dc] text-xs font-bold leading-none">‹</button>
      <div className="flex-1" />
      <div className="w-[27.5%] border-l border-[#6f8794] bg-gradient-to-b from-[#bcdae6] to-[#9cbccb]" />
      <button aria-label="Derecha" className="w-3 shrink-0 border-l border-[#6f8794] bg-[#b4d0dc] text-xs font-bold leading-none">›</button>
    </div>
    <div className="flex w-[151px] shrink-0 items-center justify-between overflow-hidden pl-2">
      <button aria-label="Deshacer"><FaUndo size={11} color="#5c8cc0" /></button>
      <button aria-label="Rehacer"><FaRedo size={11} color="#5c8cc0" /></button>
      <button aria-label="Ajustes">
        <svg width="14" height="14" viewBox="0 0 14 14"><path d="M0 6h6v8H0z" fill="#d84040" /><path d="M8 0h6v12H8z" fill="#28c030" /><path d="M2 13l8-9M8 2l4 4" stroke="#fff" strokeWidth="2" /></svg>
      </button>
      <button aria-label="Ajustar zoom"><FiSearch size={15} strokeWidth={2.5} fill="#dce8ee" /></button>
      <button aria-label="Alejar"><FiZoomOut size={15} strokeWidth={2.5} fill="#fff" /></button>
      <button aria-label="Acercar"><FiZoomIn size={15} strokeWidth={2.5} fill="#fff" /></button>
      <button aria-label="Escala">
        <svg width="14" height="12" viewBox="0 0 14 12"><path d="M0 2h14" stroke="#222" strokeWidth="2" strokeDasharray="2 1" /><path d="M7 5v3M4 8h6l-3 4z" fill="#2060d8" stroke="#2060d8" /></svg>
      </button>
    </div>
  </footer>
);

const App: React.FC = () => {
  return (
    <div className="flex h-screen flex-col overflow-hidden bg-white font-['Liberation_Sans',Arial,sans-serif] text-[9px] leading-[12px] text-black">
      <Toolbar />
      <div className="flex min-h-0 flex-1">
        <SideBar />
        <main className="flex min-w-0 flex-1 flex-col">
          <section className="relative flex min-h-0 flex-1">
            <PriceChart />
            <Axis labels={priceLabels} />
            <Tabs />
          </section>

          <Pane
            title="Sistema de trenes Doc v4 (f f)"
            swatch="bg-gradient-to-r from-[#74888f] from-50% to-black to-50%"
            height="h-[97px]"
            labels={[
              { y: 7, text: '100', box: true },
              { y: 24, text: '80', box: true },
              { y: 40, text: '60' },
              { y: 50, text: '50', color: '#0000b0', box: true },
              { y: 60, text: '36,913', box: true },
              { y: 62, text: '35,202', color: '#e02020', box: true },
              { y: 75, text: '20', box: true },
              { y: 81, text: '13,112', box: true },
              { y: 83, text: '10,741', color: '#e02020', box: true },
              { y: 89, text: '0', box: true },
            ]}
          >
            <TrainChart />
          </Pane>

          <Pane
            title="Willy Doc (t)"
            swatch="bg-[#74888f]"
            height="h-[70px]"
            labels={[
              { y: 6, text: '0', box: true },
              { y: 20, text: '-25', color: '#000090', box: true },
              { y: 36, text: '-50', color: '#000090', box: true },
              { y: 50, text: '-75', color: '#c80000', box: true },
              { y: 61, text: '-91,602', color: '#900000', box: true },
              { y: 62, text: '-100', box: true },
            ]}
          >
            <WillyChart />
          </Pane>

          <Pane
            title="Awesome Evolution Doc"
            swatch="bg-[#74888f]"
            height="h-[99px]"
            labels={[
              { y: 16, text: '1.000' },
              { y: 71, text: '-1.000' },
              { y: 38, text: '0', color: '#0000e0', box: true },
              { y: 44, text: '0', color: '#e02020', box: true },
              { y: 56, text: '-404,48', color: '#e02020', box: true },
              { y: 62, text: '-434,16', color: '#ff9400', box: true },
            ]}
          >
            <AwesomeChart />
          </Pane>

          <Pane
            title="Barra Fuerza Fondo Mercado v4 (f)"
            swatch="bg-gradient-to-r from-black from-50% to-[#74888f] to-50%"
            height="h-[56px]"
            labels={[
              { y: 12, text: '2' },
              { y: 28, text: '1' },
              { y: 37, text: '0,5000', box: true },
              { y: 49, text: '-0,4099', color: '#e02020', box: true },
            ]}
          >
            <StrengthChart />
          </Pane>

          <TimeAxis />
        </main>
      </div>
      <BottomBar />
    </div>
  );
};

export default App;
